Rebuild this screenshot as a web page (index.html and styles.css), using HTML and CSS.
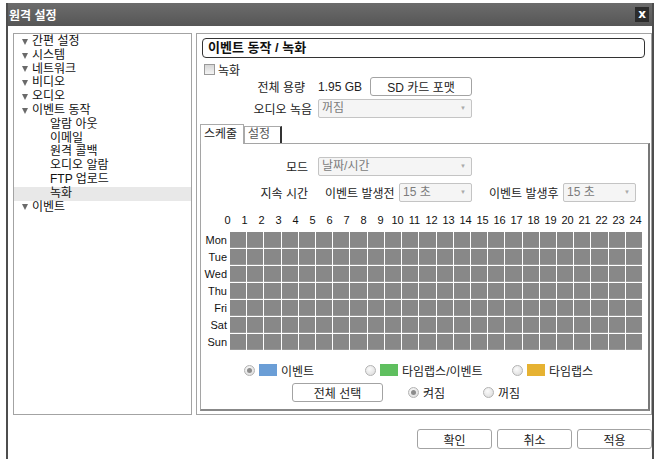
FILE: index.html
```html
<!DOCTYPE html>
<html lang="ko">
<head>
    <meta charset="UTF-8">
    <title>원격 설정</title>
    <link rel="stylesheet" href="styles.css">
</head>
<body>
    <div class="window">
        <div class="titlebar">
            <span class="title">원격 설정</span>
            <span class="close">x</span>
        </div>
        <div class="content">
            <div class="tree">
                <div class="node"><span class="arrow"></span>간편 설정</div>
                <div class="node"><span class="arrow"></span>시스템</div>
                <div class="node"><span class="arrow"></span>네트워크</div>
                <div class="node"><span class="arrow"></span>비디오</div>
                <div class="node"><span class="arrow"></span>오디오</div>
                <div class="node"><span class="arrow"></span>이벤트 동작</div>
                <div class="node sub">알람 아웃</div>
                <div class="node sub">이메일</div>
                <div class="node sub">원격 콜백</div>
                <div class="node sub">오디오 알람</div>
                <div class="node sub">FTP 업로드</div>
                <div class="node sub sel">녹화</div>
                <div class="node"><span class="arrow"></span>이벤트</div>
            </div>
            <div class="main">
                <div class="heading">이벤트 동작 / 녹화</div>
                <div class="check-row"><span class="checkbox"></span>녹화</div>
                <div class="form-row cap">
                    <span class="lbl">전체 용량</span>
                    <span class="val">1.95 GB</span>
                    <button class="btn sd">SD 카드 포맷</button>
                </div>
                <div class="form-row audio">
                    <span class="lbl">오디오 녹음</span>
                    <div class="select w154">꺼짐<span class="caret">▼</span></div>
                </div>
                <div class="tabs">
                    <div class="tab active">스케줄</div>
                    <div class="tab">설정</div>
                </div>
                <div class="tabbox">
                    <div class="form-row mode">
                        <span class="lbl">모드</span>
                        <div class="select w154">날짜/시간<span class="caret">▼</span></div>
                    </div>
                    <div class="form-row dur">
                        <span class="lbl">지속 시간</span>
                        <span class="sublbl">이벤트 발생전</span>
                        <div class="select w73">15 초<span class="caret">▼</span></div>
                        <span class="sublbl after">이벤트 발생후</span>
                        <div class="select w73">15 초<span class="caret">▼</span></div>
                    </div>
                    <div class="hours" id="hours"></div>
                    <div class="schedule">
                        <div class="days">
                            <div>Mon</div><div>Tue</div><div>Wed</div><div>Thu</div><div>Fri</div><div>Sat</div><div>Sun</div>
                        </div>
                        <div class="grid" id="grid"></div>
                    </div>
                    <div class="legend">
                        <span class="item i1"><span class="radio on"></span><span class="swatch blue"></span>이벤트</span>
                        <span class="item i2"><span class="radio"></span><span class="swatch green"></span>타임랩스/이벤트</span>
                        <span class="item"><span class="radio"></span><span class="swatch orange"></span>타임랩스</span>
                    </div>
                    <div class="actions">
                        <button class="btn all">전체 선택</button>
                        <span class="item opt"><span class="radio on"></span>켜짐</span>
                        <span class="item"><span class="radio"></span>꺼짐</span>
                    </div>
                </div>
            </div>
        </div>
        <div class="footer">
            <button class="btn foot">확인</button>
            <button class="btn foot">취소</button>
            <button class="btn foot">적용</button>
        </div>
    </div>

    <script>
        // 시간 눈금 0~24
        var hours = document.getElementById('hours');
        for (var h = 0; h <= 24; h++) {
            var s = document.createElement('span');
            s.textContent = h;
            hours.appendChild(s);
        }
        // 7일 x 24시간 셀
        var grid = document.getElementById('grid');
        for (var i = 0; i < 7 * 24; i++) {
            var c = document.createElement('div');
            c.className = 'cell';
            grid.appendChild(c);
        }
    </script>
</body>
</html>
```

FILE: styles.css
```css
body {
    margin: 0;
    background: #fff;
    font-family: "Liberation Sans", "Noto Sans CJK KR", sans-serif;
    font-size: 12px;
    color: #222;
    overflow: hidden;
}
.window {
    margin: 3px 0 0 6px;
    width: 648px;
    height: 470px;
    border-left: 2px solid #4e4e4e;
    border-right: 2px solid #4e4e4e;
    box-sizing: border-box;
    background: #fff;
}
.titlebar {
    height: 23px;
    background: linear-gradient(#6c6c6c, #565656);
    display: flex;
    align-items: center;
    justify-content: space-between;
    padding: 0 3px 0 1px;
    color: #fff;
    font-weight: bold;
}
.close {
    width: 14px;
    height: 15px;
    background: #2c2c2c;
    font: bold 12px/14px "DejaVu Sans", sans-serif;
    text-align: center;
}
.content {
    display: flex;
    gap: 4px;
    padding: 7px 0 0 5px;
}
.tree {
    width: 179px;
    height: 382px;
    border: 1px solid #a3a3a3;
    box-sizing: border-box;
    padding-top: 1px;
}
.node {
    height: 13.8px;
    line-height: 13.8px;
    padding-left: 8px;
    display: flex;
    align-items: center;
    white-space: nowrap;
    color: #111;
}
.node.sub {
    padding-left: 36px;
}
.node.sel {
    background: #e8e8e8;
}
.arrow {
    width: 0;
    height: 0;
    border-left: 3.5px solid transparent;
    border-right: 3.5px solid transparent;
    border-top: 6px solid #6a6a6a;
    margin-right: 4px;
}
.main {
    width: 456px;
    height: 382px;
    border: 1px solid #a3a3a3;
    box-sizing: border-box;
    padding: 4px 1px 0 3px;
}
.heading {
    margin: 0 5px 0 2px;
    height: 20px;
    box-sizing: border-box;
    border: 1px solid #333;
    border-radius: 4px;
    padding-left: 5px;
    font-size: 13px;
    font-weight: bold;
    line-height: 18px;
    color: #111;
}
.check-row {
    margin-top: 4px;
    height: 14px;
    display: flex;
    align-items: center;
    padding-left: 4px;
}
.checkbox {
    width: 11px;
    height: 11px;
    box-sizing: border-box;
    border: 1px solid #9a9a9a;
    background: linear-gradient(#d6d6d6, #f4f4f4);
    margin-right: 3px;
}
.form-row {
    display: flex;
    align-items: center;
    height: 19px;
    white-space: nowrap;
}
.lbl {
    text-align: right;
}
.cap {
    margin-top: 1px;
}
.cap .lbl {
    width: 105px;
    margin-right: 13px;
}
.val {
    width: 52px;
}
.audio {
    margin-top: 3px;
}
.audio .lbl {
    width: 112px;
    margin-right: 6px;
}
.btn {
    height: 19px;
    padding: 0;
    border: 1px solid #a3a3a3;
    border-radius: 3px;
    background: #fff;
    font-family: inherit;
    font-size: 12px;
    color: #222;
}
.btn.sd {
    width: 102px;
}
.select {
    position: relative;
    height: 19px;
    box-sizing: border-box;
    border: 1px solid #c4c4c4;
    border-radius: 2px;
    background: #f5f5f5;
    color: #7c7c7c;
    line-height: 17px;
    padding-left: 3px;
}
.w154 {
    width: 154px;
}
.w73 {
    width: 73px;
}
.caret {
    position: absolute;
    right: 5px;
    top: 0;
    font-size: 6px;
    color: #aaa;
}
.tabs {
    margin-top: 6px;
    height: 19px;
    display: flex;
    align-items: flex-end;
    position: relative;
    z-index: 1;
}
.tab {
    width: 38px;
    height: 17px;
    box-sizing: border-box;
    border: 1px solid #aaa;
    border-right: 2px solid #333;
    border-bottom: none;
    padding-left: 3px;
    line-height: 15px;
    color: #555;
    background: #fff;
}
.tab.active {
    width: 44px;
    height: 20px;
    margin-bottom: -1px;
    border-right: 1px solid #aaa;
    line-height: 18px;
    color: #222;
}
.tabbox {
    width: 450px;
    height: 268px;
    box-sizing: border-box;
    border: 1px solid #a5a5a5;
    border-right: 2px solid #777;
    border-bottom: 2px solid #888;
}
.mode {
    margin-top: 13px;
}
.mode .lbl, .dur .lbl {
    width: 107px;
    margin-right: 10px;
}
.dur {
    margin-top: 7px;
}
.dur .lbl {
    margin-right: 17px;
}
.sublbl {
    width: 65px;
    margin-right: 9px;
}
.sublbl.after {
    margin-left: 17px;
}
.hours {
    margin-top: 11px;
    height: 14px;
    padding-left: 18px;
    display: flex;
    font-size: 11px;
    line-height: 14px;
    color: #111;
}
.hours span {
    width: 17px;
    flex: none;
    text-align: center;
}
.schedule {
    margin-top: 5px;
    display: flex;
}
.days {
    width: 26px;
    margin-right: 3px;
    font-size: 11px;
    color: #111;
}
.days div {
    height: 17px;
    line-height: 16px;
    text-align: right;
}
.grid {
    width: 412px;
    display: grid;
    grid-template-columns: repeat(24, 1fr);
    grid-auto-rows: 16px;
    gap: 1px;
    background: #fff;
}
.cell {
    background: #888;
    box-shadow: inset 0 -1px 0 #9a9a9a;
}
.legend {
    margin-top: 12px;
    height: 14px;
    padding-left: 43px;
    display: flex;
    align-items: center;
}
.item {
    display: flex;
    align-items: center;
    white-space: nowrap;
}
.i1 {
    width: 121px;
}
.i2 {
    width: 147px;
}
.radio {
    width: 9px;
    height: 9px;
    border-radius: 50%;
    border: 1px solid #b3b3b3;
    background: radial-gradient(circle at 40% 35%, #fbfbfb, #d8d8d8);
    margin-right: 4px;
    position: relative;
}
.radio.on::after {
    content: "";
    position: absolute;
    left: 2px;
    top: 2px;
    width: 5px;
    height: 5px;
    border-radius: 50%;
    background: #8c8c8c;
}
.swatch {
    width: 18px;
    height: 12px;
    margin-right: 4px;
}
.blue {
    background: #6b9ed6;
}
.green {
    background: #5fbf5f;
}
.orange {
    background: #e6b232;
}
.actions {
    margin-top: 6px;
    height: 19px;
    padding-left: 91px;
    display: flex;
    align-items: center;
}
.btn.all {
    width: 91px;
    margin-right: 25px;
}
.opt {
    width: 75px;
}
.footer {
    margin-top: 14px;
    display: flex;
    justify-content: flex-end;
    gap: 5px;
}
.btn.foot {
    width: 75px;
    height: 20px;
}
```
